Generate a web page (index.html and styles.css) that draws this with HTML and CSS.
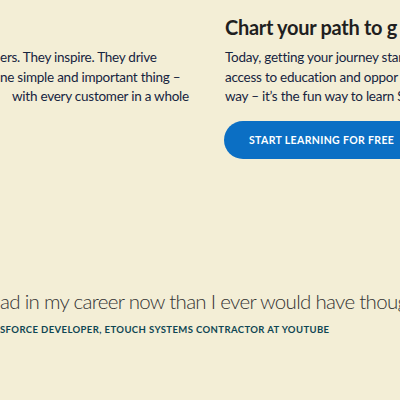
FILE: index.html
```html
<!DOCTYPE html>
<html lang="en">
<head>
<meta charset="utf-8">
<title>Trailblazers</title>
<link rel="stylesheet" href="styles.css">
</head>
<body>
<main class="page">
  <section class="columns">
    <h2 class="heading">Chart your path to g</h2>
    <p class="text text-left">
      <span class="line">ers. They inspire. They drive</span>
      <span class="line">ne simple and important thing –</span>
      <span class="line line-indent">with every customer in a whole</span>
    </p>
    <p class="text text-right">
      <span class="line">Today, getting your journey star</span>
      <span class="line">access to education and oppor</span>
      <span class="line">way – it’s the fun way to learn S</span>
    </p>
    <div class="cta">
      <a class="button" href="#">Start learning for free</a>
    </div>
  </section>
  <section class="testimonial">
    <blockquote class="quote">ad in my career now than I ever would have thoug</blockquote>
    <p class="author">sforce developer, eTouch Systems contractor at YouTube</p>
  </section>
</main>
</body>
</html>
```
FILE: styles.css
```css
* { box-sizing: border-box; }
html, body {
  margin: 0;
  padding: 0;
  background: #f3eed6;
  overflow: hidden;
  width: 400px;
  height: 400px;
}
body {
  font-family: Lato, "Noto Sans", sans-serif;
}
.page {
  padding-top: 14px;
}
.columns {
  display: grid;
  grid-template-columns: 225px 260px;
  grid-template-rows: auto auto auto;
}
.heading {
  grid-column: 2;
  grid-row: 1;
  margin: 0;
  font-size: 20px;
  font-weight: 700;
  line-height: 26px;
  letter-spacing: -0.3px;
  color: #1f1f1f;
  white-space: nowrap;
}
.text {
  margin: 8px 0 0;
  font-size: 13.5px;
  line-height: 19.6px;
  letter-spacing: -0.25px;
  color: #16243f;
  white-space: nowrap;
}
.line { display: block; }
.text-left { grid-column: 1; grid-row: 2; }
.line-indent { padding-left: 12px; }
.text-right { grid-column: 2; grid-row: 2; }
.cta {
  grid-column: 2;
  grid-row: 3;
  margin-top: 14px;
}
.button {
  display: flex;
  align-items: center;
  margin-left: -1px;
  width: 200px;
  height: 38px;
  padding-left: 25px;
  border-radius: 19px;
  background: #0b6fc4;
  color: #fff;
  text-decoration: none;
  text-transform: uppercase;
  font-size: 10.5px;
  font-weight: 700;
  letter-spacing: 0.35px;
  white-space: nowrap;
}
.testimonial {
  margin-top: 129px;
}
.quote {
  margin: 0;
  font-size: 20.5px;
  font-weight: 300;
  line-height: 26px;
  letter-spacing: -0.7px;
  color: #333333;
  white-space: nowrap;
}
.author {
  margin: 10px 0 0;
  font-size: 9.5px;
  font-weight: 700;
  letter-spacing: 0.4px;
  text-transform: uppercase;
  color: #0e4653;
  white-space: nowrap;
}
```
